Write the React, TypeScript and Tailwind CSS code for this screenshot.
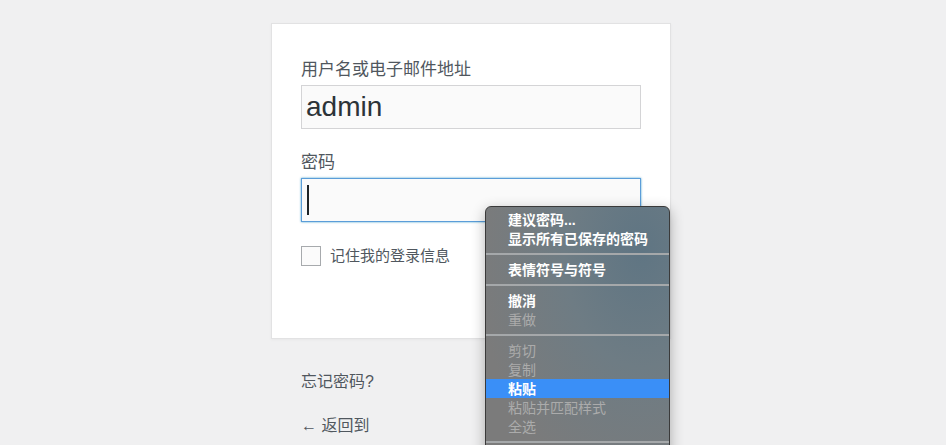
import React from 'react';

const font = { fontFamily: '"Liberation Sans", "Noto Sans CJK SC", sans-serif' };

type Item = { label: string; bold?: boolean; active?: boolean } | 'sep';

const menu: Item[] = [
  { label: '建议密码...', bold: true },
  { label: '显示所有已保存的密码', bold: true },
  'sep',
  { label: '表情符号与符号', bold: true },
  'sep',
  { label: '撤消', bold: true },
  { label: '重做' },
  'sep',
  { label: '剪切' },
  { label: '复制' },
  { label: '粘贴', bold: true, active: true },
  { label: '粘贴并匹配样式' },
  { label: '全选' },
  'sep',
];

const ContextMenu: React.FC = () => (
  <div className="absolute left-[485px] top-[206px] w-[185px] rounded-[6px] border border-[#3a3a3a] bg-[radial-gradient(ellipse_at_85%_15%,#5f7583_0%,#6e7c84_35%,#7b7b7b_75%)] pt-[3px] pb-[40px] shadow-[0_4px_14px_rgba(0,0,0,0.3)]">
    {menu.map((it, i) =>
      it === 'sep' ? (
        <div key={i} className="py-[5px]">
          <div className="h-[2px] bg-[#a5a8aa]" />
        </div>
      ) : (
        <div
          key={i}
          className={
            'flex h-[19px] items-center pl-[22px] text-[14px] leading-none ' +
            (it.active ? 'bg-[#3a8ff7] ' : '') +
            (it.bold ? 'font-bold text-white' : 'text-[#ababab]')
          }
        >
          {it.label}
        </div>
      )
    )}
  </div>
);

export default function App() {
  return (
    <div className="relative h-[445px] w-full overflow-hidden bg-[#f0f0f1] text-[#3c434a]" style={font}>
      <div className="ml-[271px] w-[400px] pt-[23px]">
        <div className="h-[316px] border border-[#e2e2e3] bg-white px-[29px] pt-[33px] shadow-[0_1px_3px_rgba(0,0,0,0.04)]">
          <label className="block text-[17px] leading-[26px] text-[#50575e]">用户名或电子邮件地址</label>
          <div className="mt-[2px] flex h-[44px] items-center border border-[#d4d4d6] bg-[#fafafa] px-[4px] text-[28px] text-[#2c3338]">
            admin
          </div>
          <label className="mt-[21px] block text-[17px] leading-[26px] text-[#50575e]">密码</label>
          <div className="mt-[2px] flex h-[44px] items-center border border-[#5b9dd9] bg-[#fafafa] px-[5px] shadow-[0_0_2px_rgba(30,140,190,0.8)]">
            <div className="h-[30px] w-[2px] bg-[#1d2327]" />
          </div>
          <div className="mt-[23px] flex items-center gap-[9px]">
            <div className="h-[20px] w-[20px] border border-[#a7aaad] bg-[#fbfbfb]" />
            <span className="text-[15px] text-[#50575e]">记住我的登录信息</span>
          </div>
        </div>
        <div className="px-[30px] pt-[32px] text-[16px] text-[#50575e]">
          <div className="leading-[22px]">忘记密码?</div>
          <div className="mt-[22px] leading-[22px]">←&nbsp;返回到</div>
        </div>
      </div>
      <ContextMenu />
    </div>
  );
}
